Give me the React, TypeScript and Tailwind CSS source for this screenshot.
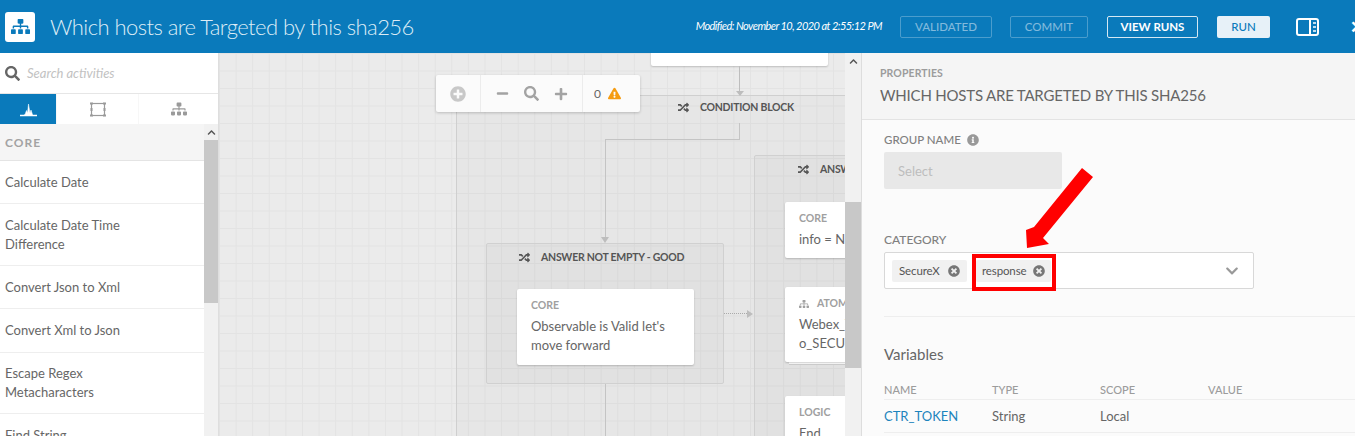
import { FaChevronDown, FaChevronUp, FaExclamationTriangle, FaInfoCircle, FaMinus, FaPlus, FaPlusCircle, FaRandom, FaSearch, FaSitemap, FaTimesCircle } from "react-icons/fa";

const activities = [
  { name: "Calculate Date", cls: "h-[43px]" },
  { name: "Calculate Date Time Difference", cls: "h-[62px]" },
  { name: "Convert Json to Xml", cls: "h-[43px]" },
  { name: "Convert Xml to Json", cls: "h-[44px]" },
  { name: "Escape Regex Metacharacters", cls: "h-[61px]" },
  { name: "Find String", cls: "h-[43px]" },
];

const Header = () => (
  <header className="h-[53px] bg-[#0a7abb] flex items-center text-white shrink-0 overflow-hidden">
    <div className="ml-[5px] w-[30px] h-[30px] bg-white rounded-[3px] flex items-center justify-center text-[#0a7abb]">
      <FaSitemap className="text-[19px]" />
    </div>
    <h1 className="ml-[15px] text-[22px] font-light text-[#dcecf6] whitespace-nowrap tracking-[-0.55px]">
      Which hosts are Targeted by this sha256
    </h1>
    <span className="ml-auto text-[11px] italic whitespace-nowrap tracking-[-0.55px]">
      Modified: November 10, 2020 at 2:55:12 PM
    </span>
    <button className="ml-[18px] w-[92px] h-[22px] rounded-[2px] border border-[#4b9dcd] text-[#80b9dc] text-[11.500px] font-medium">
      VALIDATED
    </button>
    <button className="ml-[18px] w-[78px] h-[22px] rounded-[2px] border border-[#4b9dcd] text-[#80b9dc] text-[11.500px] font-medium">
      COMMIT
    </button>
    <button className="ml-[19px] w-[91px] h-[22px] rounded-[2px] border border-[#d5e8f3] text-white text-[11.500px] font-bold">
      VIEW RUNS
    </button>
    <button className="ml-[19px] w-[53px] h-[22px] rounded-[2px] bg-[#e7f1f8] text-[#0a7abb] text-[11.500px] font-medium">
      RUN
    </button>
    <svg className="ml-[26px] w-[23px] h-[18px] shrink-0" viewBox="0 0 23 18" fill="none" stroke="white" strokeWidth="2">
      <rect x="1" y="1" width="21" height="16" rx="2" />
      <path d="M14 1v16" />
      <path d="M17 5h3M17 9h3M17 13h3" strokeWidth="1.5" />
    </svg>
    <span className="ml-[31px] w-[5px] shrink-0 overflow-hidden text-[17px] font-bold leading-none">✕</span>
  </header>
);

const Sidebar = () => (
  <aside className="w-[219px] shrink-0 bg-white flex flex-col border-r border-[#dedede] overflow-hidden">
    <div className="h-[41px] flex items-center pl-[5px] pt-px gap-[7px] border-b border-[#e6e6e6] shrink-0">
      <FaSearch className="text-[15px] text-[#666]" />
      <span className="text-[13px] italic text-[#c2c2c2]">Search activities</span>
    </div>
    <div className="h-[30px] flex bg-[#f7f7f7] shrink-0">
      <div className="w-[56px] bg-[#0a7abb] flex items-center justify-center">
        <svg className="w-[17px] h-[15px]" viewBox="0 0 17 15" fill="white">
          <path d="M0 13h3.500l1.500-.5 1.500-4 1 2.500 1-9 1.500 9 1-3 1.500 4.500.5.500h4v1H0z" stroke="white" strokeWidth="0.5" />
        </svg>
      </div>
      <div className="w-[81px] ml-px bg-white flex items-center justify-center">
        <svg className="w-[16px] h-[15px]" viewBox="0 0 16 15" fill="none" stroke="#9a9a9a">
          <rect x="1.500" y="1.500" width="13" height="12" strokeWidth="1.200" />
          <path d="M0 1.500h3M13 1.500h3M0 13.500h3M13 13.500h3M1.500 6v3M14.500 6v3" strokeWidth="2" />
        </svg>
      </div>
      <div className="flex-1 ml-px bg-white flex items-center justify-center">
        <FaSitemap className="text-[16px] text-[#9a9a9a]" />
      </div>
    </div>
    <div className="flex-1 flex min-h-0">
      <div className="w-[204px] shrink-0">
        <div className="h-[37px] bg-[#f5f5f5] border-b border-[#e4e4e4] flex items-center pl-[5px] pt-px text-[12px] font-bold tracking-[1px] text-[#a3a3a3]">
          CORE
        </div>
        {activities.map((a) => (
          <div
            key={a.name}
            className={`${a.cls} border-b border-[#eeeeee] flex items-center pl-[5px] pr-[40px] text-[13px] leading-[19px] text-[#666]`}
          >
            {a.name}
          </div>
        ))}
      </div>
      <div className="w-[14px] bg-[#f1f1f1] flex flex-col items-center">
        <div className="h-[16px] flex items-center justify-center">
          <FaChevronUp className="text-[9px] text-[#555]" />
        </div>
        <div className="w-full h-[163px] bg-[#c8c8c8]" />
      </div>
    </div>
  </aside>
);

const Node = ({ cls, label, children }: { cls: string; label: React.ReactNode; children: React.ReactNode }) => (
  <div className={`absolute bg-white rounded-[2px] shadow-[0_1px_2px_rgba(0,0,0,0.2)] pl-[14px] pt-[8px] overflow-hidden ${cls}`}>
    <div className="mt-px text-[10.500px] font-bold text-[#a0a0a0] leading-[15px] flex items-center gap-[8px] whitespace-nowrap">{label}</div>
    <div className="mt-[4px] text-[13px] leading-[18.500px] text-[#666] whitespace-nowrap">{children}</div>
  </div>
);

const BlockLabel = ({ cls, text }: { cls: string; text: string }) => (
  <div className={`absolute flex items-center gap-[11px] text-[10.500px] tracking-[-0.25px] font-bold text-[#555] whitespace-nowrap ${cls}`}>
    <FaRandom className="text-[11px]" />
    {text}
  </div>
);

// free canvas: every box and wire sits at its own coordinate
const Canvas = () => (
  <main className="relative w-[626px] shrink-0 overflow-hidden bg-[#ebebeb] bg-[linear-gradient(#e3e3e3_1px,transparent_1px),linear-gradient(90deg,#e3e3e3_1px,transparent_1px)] bg-[size:16.600px_17.500px]">
    <div className="absolute left-[237px] top-[42px] w-[500px] h-[500px] border border-[#cfcfcf] bg-[#00000005]" />
    <div className="absolute left-[535px] top-[102px] w-[200px] h-[400px] border border-[#d0d0d0] rounded-[2px] bg-[#00000005]" />
    <div className="absolute left-[267px] top-[190px] w-[238px] h-[141px] border border-[#d0d0d0] rounded-[2px] bg-[#00000005]" />

    <div className="absolute left-[432px] -top-[10px] w-[177px] h-[23px] bg-white rounded-[2px] shadow-[0_1px_2px_rgba(0,0,0,0.2)]" />
    <div className="absolute left-[520px] top-[13px] w-px h-[26px] bg-[#bdbdbd]" />
    <div className="absolute left-[517px] top-[38px] border-x-[4px] border-x-transparent border-t-[5px] border-t-[#bdbdbd]" />
    <BlockLabel cls="left-[459px] top-[47px]" text="CONDITION BLOCK" />
    <div className="absolute left-[386px] top-[70px] w-[135px] h-[17px] border-r border-b border-[#c4c4c4]" />
    <div className="absolute left-[386px] top-[86px] w-px h-[99px] bg-[#c4c4c4]" />
    <div className="absolute left-[382px] top-[184px] border-x-[4px] border-x-transparent border-t-[6px] border-t-[#bdbdbd]" />
    <BlockLabel cls="left-[300px] top-[197px]" text="ANSWER NOT EMPTY - GOOD" />
    <BlockLabel cls="left-[579px] top-[109px]" text="ANSWER" />
    <div className="absolute left-[386px] top-[331px] w-px h-[60px] bg-[#c4c4c4]" />

    <Node cls="left-[298px] top-[236px] w-[177px] h-[76px]" label="CORE">
      Observable is Valid let's
      <br />
      move forward
    </Node>

    <div className="absolute left-[505px] top-[260px] w-[23px] border-t border-dotted border-[#aaaaaa]" />
    <div className="absolute left-[528px] top-[257px] border-y-[4px] border-y-transparent border-l-[6px] border-l-[#bdbdbd]" />

    <Node cls="left-[566px] top-[149px] w-[120px] h-[56px]" label="CORE">
      info = None
    </Node>
    <div className="absolute left-[570px] top-[306px] w-[120px] h-[6px] bg-white border-b border-[#cccccc]" />
    <div className="absolute left-[568px] top-[303px] w-[120px] h-[6px] bg-white border-b border-[#cccccc]" />
    <Node
      cls="left-[566px] top-[234px] w-[120px] h-[75px]"
      label={
        <>
          <FaSitemap className="text-[10px]" />
          ATOMIC
        </>
      }
    >
      Webex_Teams
      <br />
      o_SECURITY
    </Node>
    <Node cls="left-[566px] top-[343px] w-[120px] h-[60px]" label="LOGIC">
      End
    </Node>

    <div className="absolute left-[217px] top-[22px] w-[204px] h-[37px] bg-[#fbfbfb] rounded-[2px] shadow-[0_1px_3px_rgba(0,0,0,0.2)] flex items-center text-[#a3a3a3]">
      <div className="w-[45px] h-full flex items-center justify-center border-r border-[#ececec]">
        <FaPlusCircle className="text-[16px] text-[#c8c8c8]" />
      </div>
      <div className="w-[102px] h-full flex items-center gap-[15px] pl-[15px] border-r border-[#ececec]">
        <FaMinus className="text-[13px]" />
        <FaSearch className="text-[15px]" />
        <FaPlus className="text-[14px]" />
      </div>
      <span className="ml-[11px] text-[12px] text-[#666]">0</span>
      <FaExclamationTriangle className="ml-[7px] text-[13px] text-[#f59c12]" />
    </div>
  </main>
);

const Chip = ({ text, cls }: { text: string; cls: string }) => (
  <span className={`h-[22px] bg-[#f1f1f1] rounded-[2px] flex items-center text-[11.500px] tracking-[-0.12px] text-[#555] ${cls}`}>
    {text}
    <FaTimesCircle className="text-[12px] text-[#777]" />
  </span>
);

const Properties = () => (
  <section className="relative flex-1 flex min-w-0 overflow-hidden">
    <div className="w-[17px] shrink-0 bg-[#f1f1f1] border-r border-[#dddddd] flex flex-col items-center">
      <div className="h-[16px] flex items-center justify-center">
        <FaChevronUp className="text-[9px] text-[#555]" />
      </div>
      <div className="mt-[133px] w-full h-[166px] bg-[#c8c8c8]" />
    </div>
    <div className="flex-1 min-w-0 bg-[#fbfbfb]">
      <div className="h-[67px] bg-[#f5f5f5] border-b border-[#e3e3e3] pl-[18px] pt-[14px]">
        <div className="text-[10.500px] font-bold text-[#9c9c9c] leading-[13px] tracking-[0.1px]">PROPERTIES</div>
        <div className="mt-[6px] text-[15px] leading-[18px] text-[#666] tracking-[-0.2px]">WHICH HOSTS ARE TARGETED BY THIS SHA256</div>
      </div>
      <div className="pl-[22px]">
        <div className="mt-[13px] flex items-center gap-[6px] text-[11.500px] font-medium text-[#808080] leading-[14px]">
          GROUP NAME <FaInfoCircle className="text-[12px] text-[#999]" />
        </div>
        <div className="mt-[5px] w-[178px] h-[37px] bg-[#e8e8e8] rounded-[2px] flex items-center pl-[14px] pt-[2px] text-[13px] text-[#bdbdbd]">
          Select
        </div>
        <div className="mt-[44px] text-[12px] font-medium text-[#808080] leading-[14px]">CATEGORY</div>
        <div className="mt-[5px] w-[370px] h-[37px] bg-white border border-[#d8d8d8] rounded-[2px] flex items-center pl-[7px] pr-[14px]">
          <Chip text="SecureX" cls="w-[75px] pl-[7px] gap-[8px]" />
          <Chip text="response" cls="ml-[9px] w-[75px] pl-[6px] gap-[7px]" />
          <FaChevronDown className="ml-auto text-[14px] text-[#999]" />
        </div>
        <div className="mt-[27px] border-t border-[#eeeeee]" />
        <div className="mt-[28px] text-[15px] leading-[18px] text-[#666]">Variables</div>
        <div className="mt-[20px] grid grid-cols-[108px_108px_108px_1fr] text-[11px] font-medium text-[#9c9c9c] leading-[14px] pb-[2px] border-b border-[#eeeeee]">
          <span>NAME</span>
          <span>TYPE</span>
          <span>SCOPE</span>
          <span>VALUE</span>
        </div>
        <div className="grid grid-cols-[108px_108px_108px_1fr] items-center h-[33px] pt-px text-[13px] text-[#666] border-b border-[#eeeeee]">
          <span className="text-[#1d84bd]">CTR_TOKEN</span>
          <span>String</span>
          <span>Local</span>
          <span />
        </div>
      </div>
    </div>
    {/* red annotation drawn over the screenshot */}
    <div className="absolute left-[127px] top-[201px] w-[84px] h-[37px] border-[4px] border-[#ff0000]" />
    <svg className="absolute left-[180px] top-[112px]" width="70" height="85" viewBox="0 0 70 85" fill="#ff0000">
      <path d="M57 3 L68 12 L18 73 L24 79 L2 83 L1 65 L9 62 Z" />
    </svg>
  </section>
);

export default function App() {
  return (
    <div className="w-[1355px] h-[436px] flex flex-col overflow-hidden font-['Lato',sans-serif]">
      <Header />
      <div className="flex flex-1 min-h-0">
        <Sidebar />
        <Canvas />
        <Properties />
      </div>
    </div>
  );
}
